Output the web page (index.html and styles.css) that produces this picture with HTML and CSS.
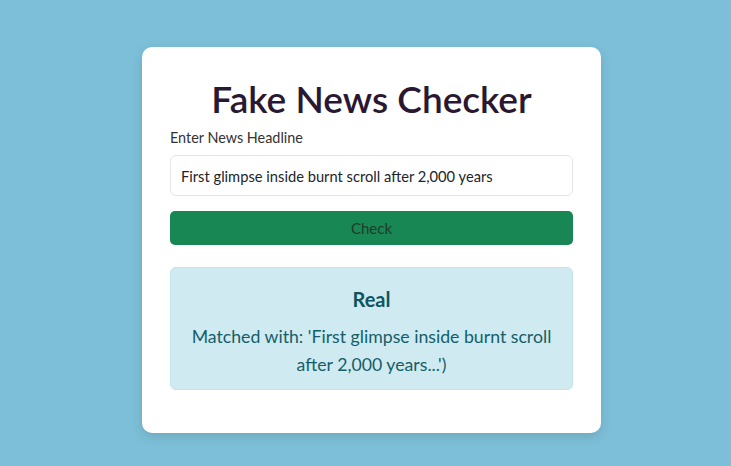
FILE: index.html
```html
<!DOCTYPE html>
<html lang="en">
<head>
<meta charset="utf-8">
<title>Fake News Checker</title>
<link rel="stylesheet" href="styles.css">
</head>
<body>
<main class="card">
  <h1 class="title">Fake News Checker</h1>
  <label class="label" for="headline">Enter News Headline</label>
  <input class="input" id="headline" type="text" value="First glimpse inside burnt scroll after 2,000 years">
  <button class="btn" type="button">Check</button>
  <section class="result">
    <h4 class="result-title">Real</h4>
    <p class="result-text">Matched with: 'First glimpse inside burnt scroll after 2,000 years...')</p>
  </section>
</main>
</body>
</html>
```

FILE: styles.css
```css
html, body {
  margin: 0;
  padding: 0;
}
body {
  background: #7dbfd8;
  font-family: "Lato", "Noto Sans", sans-serif;
  height: 466px;
  overflow: hidden;
}
.card {
  box-sizing: border-box;
  width: 459px;
  margin: 47px 0 0 142px;
  background: #fff;
  border-radius: 10px;
  box-shadow: 0 4px 12px rgba(0, 0, 0, 0.12);
  padding: 28px 28px 43px;
  display: flex;
  flex-direction: column;
}
.title {
  margin: 0;
  text-align: center;
  font-size: 37px;
  font-weight: 600;
  line-height: 48px;
  color: #2a1731;
}
.label {
  margin-top: 4px;
  font-size: 14.4px;
  line-height: 21px;
  color: #333;
}
.input {
  box-sizing: border-box;
  margin-top: 7px;
  height: 41px;
  width: 100%;
  border: 1px solid #e3e5e8;
  border-radius: 6px;
  padding: 0 10px;
  font-family: inherit;
  font-size: 14.7px;
  color: #212529;
  background: #fff;
}
.btn {
  margin-top: 15px;
  height: 34px;
  width: 100%;
  border: none;
  border-radius: 5px;
  background: #198754;
  color: #1d3b2c;
  font-family: inherit;
  font-size: 15px;
}
.result {
  margin-top: 22px;
  background: #cfeaf0;
  border: 1px solid #c2e4eb;
  border-radius: 6px;
  padding: 19px 16px 10px;
  text-align: center;
  color: #155e69;
}
.result-title {
  margin: 0;
  font-size: 20px;
  font-weight: 700;
  line-height: 24px;
  color: #0f5560;
}
.result-text {
  margin: 12px 0 0;
  font-size: 17.7px;
  line-height: 28px;
}
```
